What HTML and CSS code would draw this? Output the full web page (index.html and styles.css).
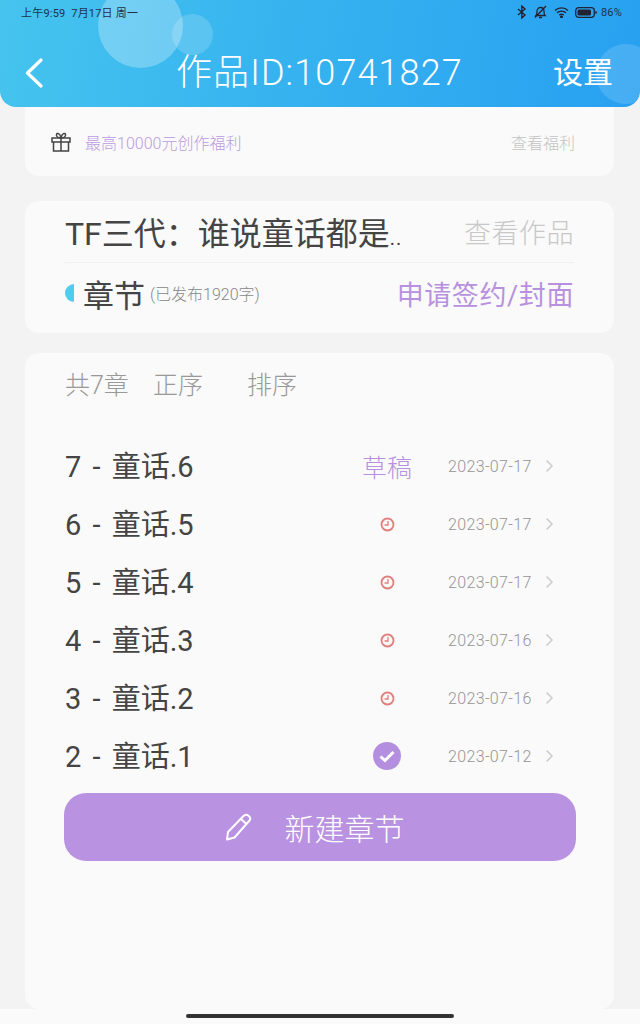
FILE: index.html
```html
<!DOCTYPE html>
<html lang="zh-CN">

<head>
    <meta charset="UTF-8">
    <meta name="viewport" content="width=device-width, initial-scale=1.0">
    <title>章节管理</title>
    <link rel="stylesheet" href="styles.css">
</head>

<body>
    <!--顶部蓝色区域-->
    <div class="header">
        <span class="bubble bubble-big"></span>
        <span class="bubble bubble-small"></span>
        <span class="bubble bubble-right"></span>
        <div class="status">
            <span>上午9:59&nbsp;&nbsp;7月17日 周一</span>
            <div class="status-right">
                <svg width="10" height="14" viewBox="0 0 10 14" fill="none" stroke="#223" stroke-width="1.4"><path d="M1 4l7 6-3.2 3V1L8 4l-7 6"/></svg>
                <svg width="15" height="14" viewBox="0 0 15 14" fill="none" stroke="#223" stroke-width="1.3"><path d="M3 10.5c1-1 1-2 1-4s1.500-4 3.500-4 3.500 1.500 3.500 4 0 3 1 4zM6 12.500h3M2 12.500L13 1"/></svg>
                <svg width="15" height="12" viewBox="0 0 15 12" fill="none" stroke="#223" stroke-width="1.4"><path d="M1 4.500c3.500-3.500 9.500-3.500 13 0M3 6.800c2.500-2.300 6.500-2.300 9 0M5.200 9c1.300-1 3.300-1 4.600 0"/><circle cx="7.500" cy="10.800" r=".8" fill="#223"/></svg>
                <svg width="22" height="11" viewBox="0 0 22 11"><rect x=".7" y=".7" width="18.600" height="9.600" rx="3" fill="none" stroke="#223" stroke-width="1.300"/><rect x="2.500" y="2.500" width="13.500" height="6" rx="1.500" fill="#223"/><rect x="20.300" y="4" width="1.400" height="3" rx=".7" fill="#223"/></svg>
                <span class="battery">86%</span>
            </div>
        </div>
        <div class="nav">
            <svg class="back" width="18" height="30" viewBox="0 0 18 30" fill="none" stroke="#fff" stroke-width="3.200" stroke-linecap="round" stroke-linejoin="round"><path d="M16 2L2.500 15 16 28"/></svg>
            <div class="nav-title">作品ID:10741827</div>
            <div class="nav-set">设置</div>
        </div>
    </div>

    <div class="content">
        <!--福利-->
        <div class="card card-gift">
            <svg width="22" height="22" viewBox="0 0 22 22" fill="none" stroke="#444" stroke-width="1.500"><rect x="2" y="7" width="18" height="4"/><path d="M3.500 11v9h15v-9M11 7v13M11 7C8 7 6 5.500 6.500 3.500S10 2 11 7zM11 7c3 0 5-1.500 4.500-3.500S12 2 11 7z"/></svg>
            <span class="gift-text">最高10000元创作福利</span>
            <span class="gift-more">查看福利</span>
        </div>

        <!--作品信息-->
        <div class="card card-work">
            <div class="work-top">
                <span class="work-name">TF三代：谁说童话都是<i class="dots">..</i></span>
                <span class="work-view">查看作品</span>
            </div>
            <div class="work-bottom">
                <span class="dot"></span>
                <span class="work-chapter">章节</span>
                <span class="work-count">(已发布1920字)</span>
                <span class="work-apply">申请签约/封面</span>
            </div>
        </div>

        <!--章节列表-->
        <div class="card card-list">
            <div class="tools">
                <span>共7章</span>
                <span class="tool-sort">正序</span>
                <span class="tool-order">排序</span>
            </div>
            <ul class="list">
                <li>
                    <span class="name">7 - 童话.6</span>
                    <span class="state draft">草稿</span>
                    <span class="date">2023-07-17</span>
                    <svg class="arrow" width="9" height="14" viewBox="0 0 9 14" fill="none" stroke="#ccc" stroke-width="1.500"><path d="M1.500 1.500L7 7l-5.500 5.500"/></svg>
                </li>
                <li>
                    <span class="name">6 - 童话.5</span>
                    <span class="state"><svg width="15" height="15" viewBox="0 0 15 15" fill="none" stroke="#e07f7c" stroke-width="1.800"><circle cx="7.500" cy="7.500" r="6"/><path d="M8 4v4H4.500" stroke-width="1.300"/></svg></span>
                    <span class="date">2023-07-17</span>
                    <svg class="arrow" width="9" height="14" viewBox="0 0 9 14" fill="none" stroke="#ccc" stroke-width="1.500"><path d="M1.500 1.500L7 7l-5.500 5.500"/></svg>
                </li>
                <li>
                    <span class="name">5 - 童话.4</span>
                    <span class="state"><svg width="15" height="15" viewBox="0 0 15 15" fill="none" stroke="#e07f7c" stroke-width="1.800"><circle cx="7.500" cy="7.500" r="6"/><path d="M8 4v4H4.500" stroke-width="1.300"/></svg></span>
                    <span class="date">2023-07-17</span>
                    <svg class="arrow" width="9" height="14" viewBox="0 0 9 14" fill="none" stroke="#ccc" stroke-width="1.500"><path d="M1.500 1.500L7 7l-5.500 5.500"/></svg>
                </li>
                <li>
                    <span class="name">4 - 童话.3</span>
                    <span class="state"><svg width="15" height="15" viewBox="0 0 15 15" fill="none" stroke="#e07f7c" stroke-width="1.800"><circle cx="7.500" cy="7.500" r="6"/><path d="M8 4v4H4.500" stroke-width="1.300"/></svg></span>
                    <span class="date">2023-07-16</span>
                    <svg class="arrow" width="9" height="14" viewBox="0 0 9 14" fill="none" stroke="#ccc" stroke-width="1.500"><path d="M1.500 1.500L7 7l-5.500 5.500"/></svg>
                </li>
                <li>
                    <span class="name">3 - 童话.2</span>
                    <span class="state"><svg width="15" height="15" viewBox="0 0 15 15" fill="none" stroke="#e07f7c" stroke-width="1.800"><circle cx="7.500" cy="7.500" r="6"/><path d="M8 4v4H4.500" stroke-width="1.300"/></svg></span>
                    <span class="date">2023-07-16</span>
                    <svg class="arrow" width="9" height="14" viewBox="0 0 9 14" fill="none" stroke="#ccc" stroke-width="1.500"><path d="M1.500 1.500L7 7l-5.500 5.500"/></svg>
                </li>
                <li>
                    <span class="name">2 - 童话.1</span>
                    <span class="state"><svg width="28" height="28" viewBox="0 0 28 28"><circle cx="14" cy="14" r="14" fill="#b48fe0"/><path d="M7.500 14.500l4.500 4 8.500-8.500" fill="none" stroke="#fff" stroke-width="3"/></svg></span>
                    <span class="date">2023-07-12</span>
                    <svg class="arrow" width="9" height="14" viewBox="0 0 9 14" fill="none" stroke="#ccc" stroke-width="1.500"><path d="M1.500 1.500L7 7l-5.500 5.500"/></svg>
                </li>
            </ul>
            <div class="btn-new">
                <svg width="28" height="28" viewBox="0 0 28 28" fill="none" stroke="#fff" stroke-width="2" stroke-linejoin="round"><path d="M2 26.500l1-7.500L18.500 3c1.500-1.500 3.500-1.500 5-.3s2.500 3.300 1 4.800L9.500 24.500zM16 6l6 5.500"/></svg>
                <span>新建章节</span>
            </div>
        </div>
    </div>

    <div class="home-bar"></div>
</body>

</html>
```

FILE: styles.css
```css
* {
    margin: 0;
    padding: 0;
    box-sizing: border-box;
}

ul {
    list-style: none;
}

html,
body {
    height: 1024px;
    overflow: hidden;
}

body {
    position: relative;
    background-color: #fafafa;
    font-family: Roboto, "Noto Sans CJK SC", sans-serif;
    font-weight: 300;
    color: #444;
}

.header {
    position: relative;
    z-index: 2;
    height: 107px;
    overflow: hidden;
    border-radius: 0 0 16px 16px;
    background: linear-gradient(100deg, #46c4ee 0%, #36b3ef 45%, #28a0f1 100%);
}

.bubble {
    position: absolute;
    border-radius: 50%;
}

.bubble-big {
    left: 98px;
    top: -17px;
    width: 85px;
    height: 85px;
    background-color: rgba(255, 255, 255, 0.27);
}

.bubble-small {
    left: 172px;
    top: 14px;
    width: 41px;
    height: 41px;
    background-color: rgba(255, 255, 255, 0.17);
}

.bubble-right {
    left: 596px;
    top: 44px;
    width: 60px;
    height: 60px;
    background-color: rgba(255, 255, 255, 0.14);
}

.status {
    position: relative;
    display: flex;
    justify-content: space-between;
    align-items: center;
    height: 24px;
    padding: 0 18px 0 21px;
    font-size: 11px;
    letter-spacing: 0.200px;
    font-weight: 400;
    color: #22304a;
}

.status-right {
    display: flex;
    align-items: center;
    gap: 6px;
}

.battery {
    font-size: 11px;
    margin-left: -2px;
}

.nav {
    position: relative;
    display: flex;
    align-items: center;
    height: 50px;
    margin-top: 24px;
    padding: 0 27px 0 25px;
    color: #fff;
}

.nav-title {
    margin-left: 133px;
    font-size: 36px;
    letter-spacing: 1.100px;
    line-height: 50px;
    white-space: nowrap;
}

.nav-set {
    margin-left: auto;
    font-size: 30px;
    line-height: 50px;
    font-weight: 400;
}

.content {
    display: flex;
    flex-direction: column;
    height: 1009px;
    margin-top: -107px;
    padding: 0 26px 0 25px;
    background-color: #f3f3f3;
}

.card {
    background-color: #fafafa;
    border-radius: 14px;
}

.card-gift {
    display: flex;
    align-items: center;
    height: 176px;
    padding: 107px 39px 0 25px;
    flex-shrink: 0;
}

.gift-text {
    margin-left: 13px;
    font-size: 16px;
    color: #bb9be0;
}

.gift-more {
    margin-left: auto;
    font-size: 16px;
    color: #c4c4c4;
}

.card-work {
    margin-top: 25px;
    height: 132px;
    padding: 0 40px;
    flex-shrink: 0;
}

.work-top {
    display: flex;
    justify-content: space-between;
    align-items: center;
    height: 62px;
    margin-bottom: 1px;
    padding-bottom: 1px;
    border-bottom: 1px solid #f0f0f0;
    white-space: nowrap;
}

.work-name {
    font-size: 32px;
    font-weight: 400;
    color: #444;
}

.dots {
    font-size: 20px;
    font-style: normal;
    letter-spacing: 1px;
}

.work-view {
    font-size: 27px;
    color: #c8c8c8;
    letter-spacing: 0.500px;
}

.work-bottom {
    display: flex;
    align-items: center;
    height: 60px;
    padding-bottom: 2px;
}

.dot {
    width: 9px;
    height: 18px;
    margin-right: 9px;
    background-color: #4fcdee;
    border-radius: 9px 0 0 9px;
}

.work-chapter {
    font-size: 31px;
    font-weight: 400;
    color: #444;
}

.work-count {
    margin-left: 5px;
    font-size: 16px;
    color: #888;
}

.work-apply {
    margin-left: auto;
    font-size: 27px;
    letter-spacing: 0.600px;
    color: #b791e0;
    font-weight: 400;
    white-space: nowrap;
}

.card-list {
    flex: 1;
    margin-top: 20px;
    padding: 0 38px 0 39px;
}

.tools {
    display: flex;
    align-items: center;
    height: 60px;
    padding-left: 1px;
    font-size: 25px;
    color: #999;
}

.tool-sort {
    margin-left: 24px;
}

.tool-order {
    margin-left: 44px;
}

.list {
    margin-top: 24px;
}

.list li {
    display: flex;
    align-items: center;
    height: 58px;
    padding-left: 1px;
    padding-right: 22px;
}

.name {
    position: relative;
    top: -2px;
    font-size: 29px;
    font-weight: 400;
    word-spacing: 4px;
    color: #444;
    white-space: nowrap;
}

.state {
    display: flex;
    justify-content: center;
    align-items: center;
    width: 60px;
    margin-left: auto;
    margin-right: 31px;
}

.draft {
    font-size: 25px;
    color: #b791e0;
}

.date {
    width: 90px;
    font-size: 16px;
    letter-spacing: 0.350px;
    color: #959595;
    white-space: nowrap;
}

.arrow {
    display: block;
    margin-left: 7px;
}

.btn-new {
    display: flex;
    justify-content: center;
    align-items: center;
    gap: 32px;
    height: 68px;
    margin-top: 8px;
    padding-right: 11px;
    background-color: #b993e2;
    border-radius: 22px;
    font-size: 30px;
    color: #fff;
}

.home-bar {
    position: absolute;
    left: 186px;
    bottom: 6px;
    width: 268px;
    height: 4px;
    background-color: #333;
    border-radius: 2px;
}
```
